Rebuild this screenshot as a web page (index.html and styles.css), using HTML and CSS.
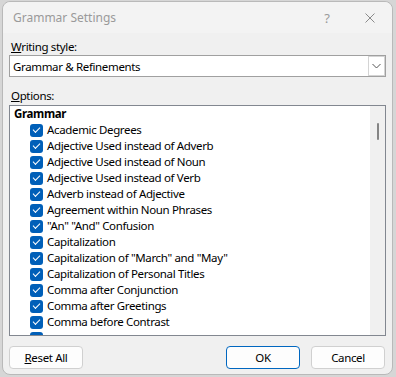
FILE: index.html
```html
<!DOCTYPE html>
<html lang="en">
<head>
    <meta charset="UTF-8">
    <title>Grammar Settings</title>
    <link rel="stylesheet" href="styles.css">
</head>
<body>
    <div class="dialog">
        <div class="title-bar">
            <span class="title">Grammar Settings</span>
            <span class="help">?</span>
            <svg class="close" width="10" height="10" viewBox="0 0 10 10">
                <path d="M0.5 0.5 L9.5 9.5 M9.5 0.5 L0.5 9.5" stroke="#8a8a8a" stroke-width="1" fill="none"/>
            </svg>
        </div>

        <div class="content">
            <div class="label"><u>W</u>riting style:</div>
            <div class="combo">
                <span class="combo-text">Grammar &amp; Refinements</span>
                <span class="combo-button">
                    <svg width="9" height="6" viewBox="0 0 9 6">
                        <path d="M0.5 1 L4.5 5 L8.5 1" stroke="#555" stroke-width="1" fill="none"/>
                    </svg>
                </span>
            </div>

            <div class="label options-label"><u>O</u>ptions:</div>
            <div class="list">
                <div class="list-items">
                    <div class="group">Grammar</div>
                    <div class="item"><span class="check"></span>Academic Degrees</div>
                    <div class="item"><span class="check"></span>Adjective Used instead of Adverb</div>
                    <div class="item"><span class="check"></span>Adjective Used instead of Noun</div>
                    <div class="item"><span class="check"></span>Adjective Used instead of Verb</div>
                    <div class="item"><span class="check"></span>Adverb instead of Adjective</div>
                    <div class="item"><span class="check"></span>Agreement within Noun Phrases</div>
                    <div class="item"><span class="check"></span>"An" "And" Confusion</div>
                    <div class="item"><span class="check"></span>Capitalization</div>
                    <div class="item"><span class="check"></span>Capitalization of "March" and "May"</div>
                    <div class="item"><span class="check"></span>Capitalization of Personal Titles</div>
                    <div class="item"><span class="check"></span>Comma after Conjunction</div>
                    <div class="item"><span class="check"></span>Comma after Greetings</div>
                    <div class="item"><span class="check"></span>Comma before Contrast</div>
                    <div class="item"><span class="check"></span></div>
                </div>
                <div class="scrollbar"><div class="thumb"></div></div>
            </div>

            <div class="buttons">
                <button class="btn"><u>R</u>eset All</button>
                <span class="spacer"></span>
                <button class="btn default">OK</button>
                <button class="btn">Cancel</button>
            </div>
        </div>
    </div>
</body>
</html>
```

FILE: styles.css
```css
body {
    margin: 0;
    background: #d6d6d6;
    font-family: "Noto Sans", sans-serif;
    font-size: 12px;
    color: #000000;
    height: 377px;
    overflow: hidden;
}

.dialog {
    margin: 1px 3px 0 2px;
    height: 372px;
    border: 1px solid #b9b9b9;
    border-radius: 8px;
    background: #f0f0f0;
    display: flex;
    flex-direction: column;
}

.title-bar {
    height: 31px;
    display: flex;
    align-items: center;
    padding: 0 17px 0 10px;
    background: #f3f3f3;
    border-radius: 8px 8px 0 0;
}

.title {
    flex: 1;
    color: #9a9a9a;
}

.help {
    color: #9a9a9a;
    font-size: 13px;
    margin-right: 35px;
}

.content {
    padding: 5px 6px 0 6px;
    display: flex;
    flex-direction: column;
    font-size: 11.5px;
    letter-spacing: -0.35px;
}

.label {
    height: 17px;
    line-height: 17px;
    padding-left: 2px;
}

.options-label {
    margin-top: 9px;
}

.combo {
    height: 20px;
    border: 1px solid #a0a0a0;
    background: #ffffff;
    display: flex;
    align-items: center;
    margin-bottom: 1px;
}

.combo-text {
    flex: 1;
    padding-left: 3px;
}

.combo-button {
    width: 15px;
    height: 18px;
    border: 1px solid #d4d4d4;
    display: flex;
    align-items: center;
    justify-content: center;
}

.list {
    margin-top: 1px;
    height: 229px;
    border: 1px solid #828790;
    background: #ffffff;
    display: flex;
    overflow: hidden;
}

.list-items {
    flex: 1;
}

.group {
    height: 16px;
    line-height: 16px;
    padding-left: 4px;
    font-weight: bold;
}

.item {
    height: 16px;
    line-height: 16px;
    display: flex;
    align-items: center;
    padding-left: 20px;
}

.check {
    width: 13px;
    height: 13px;
    border-radius: 3px;
    background: #005fb8;
    margin-right: 4px;
    position: relative;
    flex-shrink: 0;
}

/* the tick inside the box */
.check::after {
    content: "";
    position: absolute;
    left: 3px;
    top: 3px;
    width: 6px;
    height: 3px;
    border-left: 1.3px solid #ffffff;
    border-bottom: 1.3px solid #ffffff;
    transform: rotate(-45deg);
}

.scrollbar {
    width: 15px;
    background: #f0f0f0;
    display: flex;
    justify-content: center;
    padding-top: 17px;
}

.thumb {
    width: 2px;
    height: 17px;
    border-radius: 1px;
    background: #858585;
}

.buttons {
    display: flex;
    gap: 11px;
    margin-top: 10px;
    padding-right: 1px;
}

.spacer {
    flex: 1;
}

.btn {
    width: 74px;
    height: 23px;
    font-family: "Noto Sans", sans-serif;
    font-size: 11.5px;
    letter-spacing: -0.35px;
    color: #000000;
    background: #fdfdfd;
    border: 1px solid #d0d0d0;
    border-radius: 4px;
    padding: 0;
}

.btn.default {
    border-color: #0067c0;
}
```
